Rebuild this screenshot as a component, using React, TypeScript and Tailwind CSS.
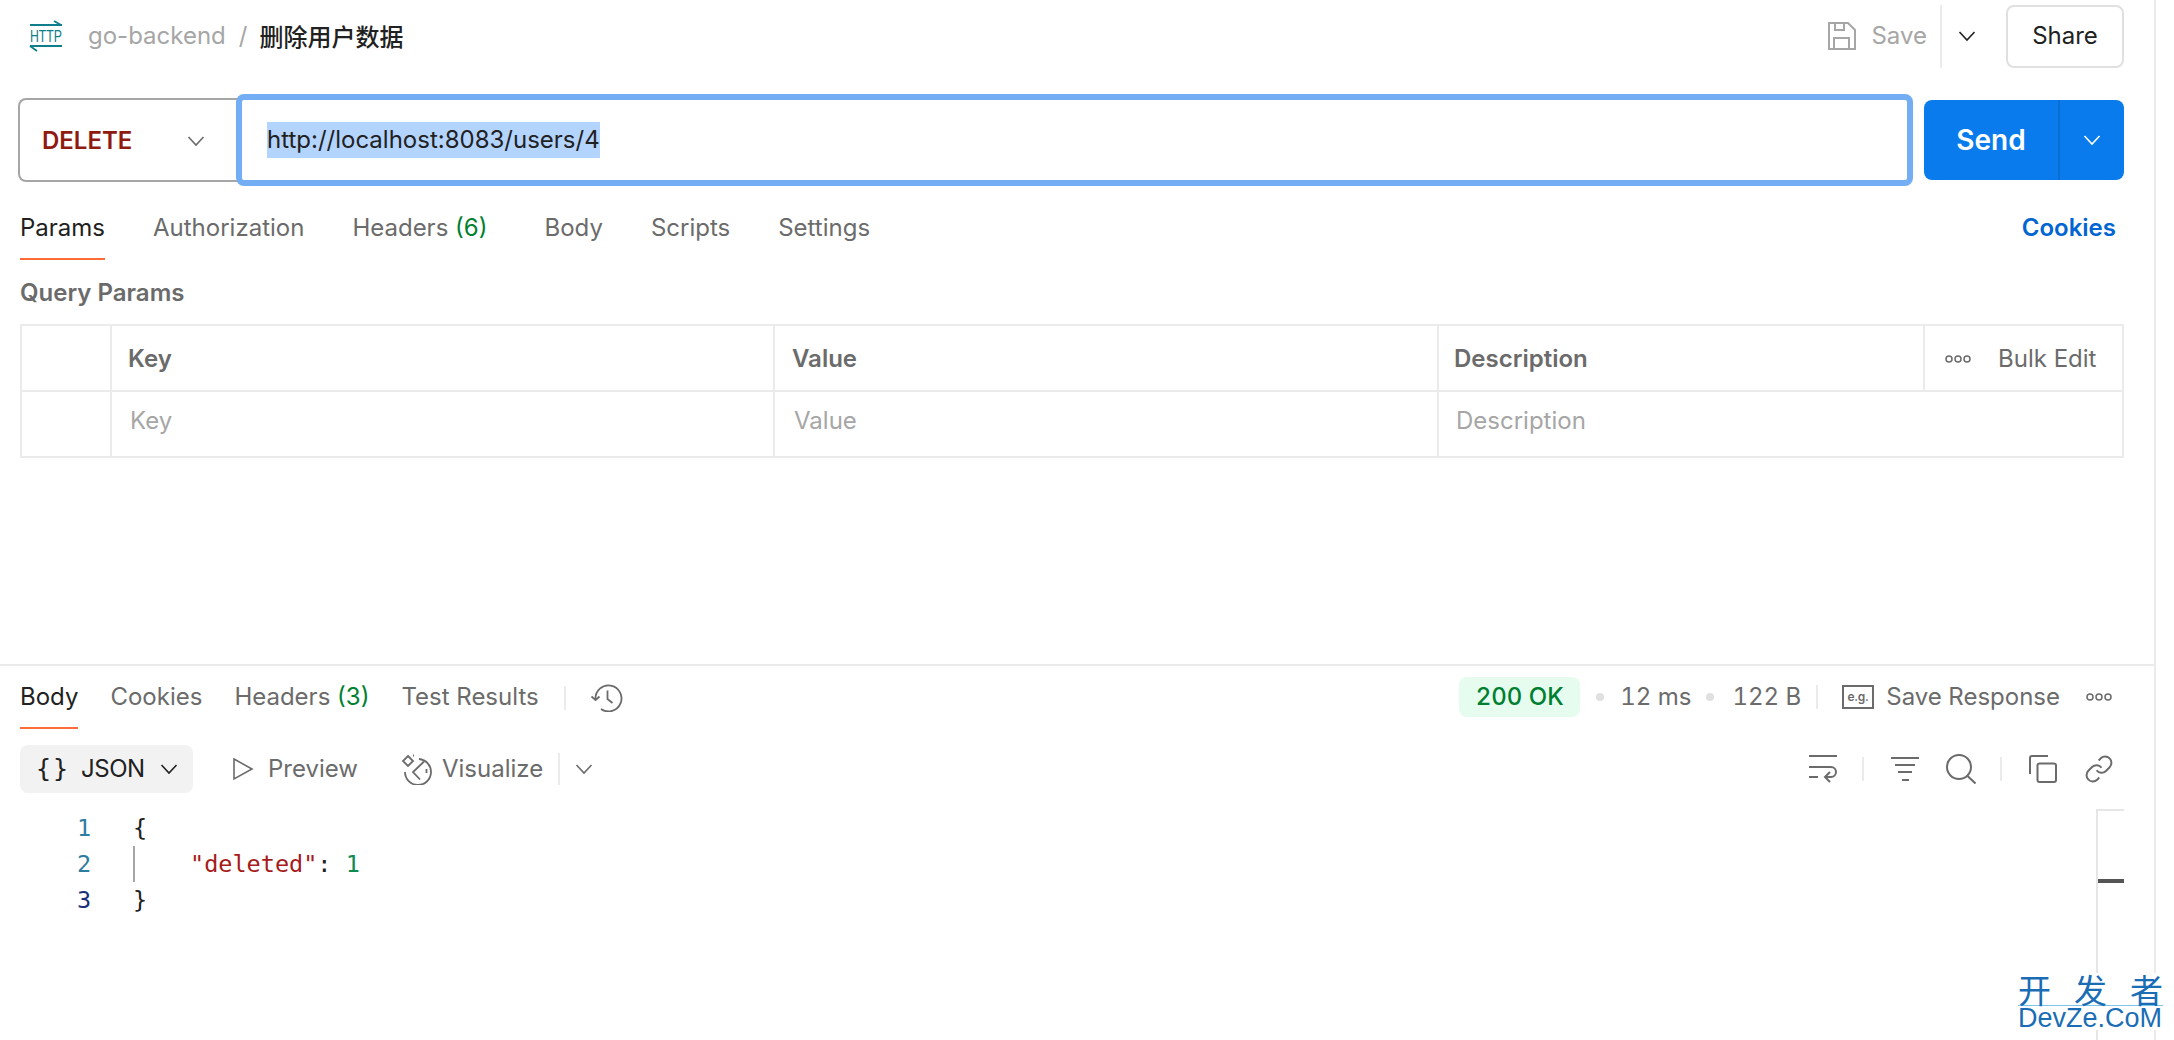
import { ReactNode } from 'react';

const Chevron = ({ className = '', size = 18 }: { className?: string; size?: number }) => (
  <svg width={size} height={size} viewBox="0 0 18 18" fill="none" stroke="currentColor" strokeWidth="1.6" className={className}>
    <path d="M1.5 5 L9 13 L16.5 5" />
  </svg>
);

const HttpLogo = () => (
  <svg width="34" height="32" viewBox="0 0 34 32" fill="none" stroke="#0e7d8c" strokeWidth="1.8" className="overflow-visible">
    <path d="M1 5h32M25 1l7 4" />
    <text x="1" y="22" fontFamily="Liberation Sans, sans-serif" fontSize="16.5" fill="#0e7d8c" stroke="none" textLength="32" lengthAdjust="spacingAndGlyphs">HTTP</text>
    <path d="M1 26h32M1 26l7 5" />
  </svg>
);

const SaveIcon = () => (
  <svg width="30" height="30" viewBox="0 0 30 30" fill="none" stroke="#a6a6a6" strokeWidth="2">
    <path d="M2 2h19l7 7v19H2z" />
    <path d="M8 2v7h9V2M7 28V17h15v11" />
  </svg>
);

const Dots = () => (
  <svg width="28" height="10" viewBox="0 0 28 10" fill="none" stroke="#6b6b6b" strokeWidth="1.5">
    <circle cx="5" cy="5" r="3" />
    <circle cx="14" cy="5" r="3" />
    <circle cx="23" cy="5" r="3" />
  </svg>
);

const HistoryIcon = () => (
  <svg width="32" height="28" viewBox="0 0 32 28" fill="none" stroke="#6b6b6b" strokeWidth="1.8">
    <path d="M4.500 15A13 13 0 1 1 10 25" />
    <path d="M0.500 12.500l4 3.500 4-3.500" />
    <path d="M16.500 6.500v8.500l5 4" />
  </svg>
);

const ExampleIcon = () => (
  <svg width="32" height="24" viewBox="0 0 32 24" fill="none">
    <rect x="1" y="1" width="30" height="22" stroke="#6b6b6b" strokeWidth="2" />
    <text x="16" y="16" textAnchor="middle" fontFamily="Inter, sans-serif" fontSize="12" fontWeight="600" fill="#6b6b6b">e.g.</text>
  </svg>
);

const WrapIcon = () => (
  <svg width="28" height="28" viewBox="0 0 28 28" fill="none" stroke="#6b6b6b" strokeWidth="2">
    <path d="M0 1h28M0 12h22a5 5 0 0 1 0 10H16" />
    <path d="M0 22h9M21 17l-5 5 5 5" />
  </svg>
);

const FilterIcon = () => (
  <svg width="28" height="26" viewBox="0 0 28 26" fill="none" stroke="#6b6b6b" strokeWidth="2">
    <path d="M0 2h28M4 9h20M7 16h14M11 24h7" />
  </svg>
);

const SearchIcon = () => (
  <svg width="30" height="30" viewBox="0 0 30 30" fill="none" stroke="#6b6b6b" strokeWidth="2">
    <circle cx="13" cy="13" r="12" />
    <path d="M21.500 22l8 7.500" />
  </svg>
);

const CopyIcon = () => (
  <svg width="28" height="28" viewBox="0 0 28 28" fill="none" stroke="#6b6b6b" strokeWidth="2">
    <path d="M1 19V3a2 2 0 0 1 2-2h16" />
    <rect x="8.500" y="8.500" width="18.500" height="18.500" rx="2" />
  </svg>
);

const LinkIcon = () => (
  <svg width="30" height="30" viewBox="0 0 24 24" fill="none" stroke="#6b6b6b" strokeWidth="1.600">
    <path d="M10 13a5 5 0 0 0 7.540.540l3-3a5 5 0 0 0-7.070-7.070l-1.720 1.710" />
    <path d="M14 11a5 5 0 0 0-7.540-.540l-3 3a5 5 0 0 0 7.070 7.070l1.710-1.710" />
  </svg>
);

const PlayIcon = () => (
  <svg width="22" height="24" viewBox="0 0 22 24" fill="none" stroke="#6b6b6b" strokeWidth="1.600">
    <path d="M2 2l18 10-18 10z" />
  </svg>
);

const VisualizeIcon = () => (
  <svg width="32" height="32" viewBox="0 0 32 32" fill="none" stroke="#6b6b6b" strokeWidth="1.800">
    <path d="M18 6a13 13 0 1 1-14 13" />
    <path d="M23 8.500l-11 10.500 7 7.500" />
    <path d="M25.500 16v4" />
    <path d="M7 3l5 5-5 5-5-5z" />
    <path d="M12 2.500h1" />
  </svg>
);

const Tab = ({ children, active, tall, className = '' }: { children: ReactNode; active?: boolean; tall?: boolean; className?: string }) => (
  <div
    className={`border-b-2 ${tall ? 'pt-[13px]' : 'pt-[16px]'} leading-[30px] ${
      active ? 'border-[#ff6c37] text-[#212121]' : 'border-transparent text-[#6b6b6b]'
    } ${className}`}
  >
    {children}
  </div>
);

const Cell = ({ children, className = '' }: { children?: ReactNode; className?: string }) => (
  <div className={`flex items-center border-[#ebebeb] ${className}`}>{children}</div>
);

const VLine = ({ className = '' }: { className?: string }) => <div className={`w-[2px] bg-[#ebebeb] ${className}`} />;
const Dot = () => <div className="size-[8px] rounded-full bg-[#e0e0e0]" />;

export default function App() {
  return (
    <div className="relative h-[1040px] w-[2174px] overflow-hidden bg-white font-['Inter',sans-serif] text-[24px] text-[#212121]">
      <div className="flex h-full w-[2156px] flex-col border-r-2 border-[#ebebeb]">
        {/* Header */}
        <div className="flex h-[71px] items-center justify-between pl-[29px] pr-[30px] pt-[1px]">
          <div className="flex items-center">
            <HttpLogo />
            <span className="ml-[25px] text-[#a6a6a6]">go-backend</span>
            <span className="ml-[13px] text-[#a6a6a6]">/</span>
            <span className="ml-[12px] font-['Noto_Sans_CJK_SC',sans-serif] font-medium">删除用户数据</span>
          </div>
          <div className="flex h-[63px] items-center">
            <SaveIcon />
            <span className="ml-[14px] text-[#a6a6a6]">Save</span>
            <VLine className="ml-[13px] h-[63px]" />
            <Chevron className="ml-[16px] text-[#212121]" />
            <div className="ml-[30px] flex h-[63px] w-[118px] items-center justify-center rounded-[8px] border-2 border-[#e0e0e0]">Share</div>
          </div>
        </div>

        {/* URL bar */}
        <div className="mt-[23px] flex h-[92px] items-center pl-[18px] pr-[30px]">
          <div className="flex h-[84px] w-[224px] items-center rounded-l-[8px] border-2 border-r-0 border-[#a6a6a6] pl-[22px] pt-[1px] font-semibold text-[#8e1a10]">
            DELETE
            <Chevron className="ml-[55px] text-[#6b6b6b]" />
          </div>
          <div className="-ml-[6px] flex h-[92px] flex-1 items-center rounded-[8px] border-[6px] border-[#73aef5] pl-[25px]">
            <span className="bg-[#b3d4ff] leading-[36px]">http://localhost:8083/users/4</span>
          </div>
          <div className="ml-[11px] flex h-[80px] w-[200px] rounded-[8px] bg-[#097bed] text-white">
            <div className="flex w-[136px] items-center justify-center border-r-2 border-[#0a6fd4] text-[28px] font-semibold">Send</div>
            <div className="flex flex-1 items-center justify-center">
              <Chevron />
            </div>
          </div>
        </div>

        {/* Request tabs */}
        <div className="mt-[14px] flex h-[60px] items-stretch justify-between pl-[20px] pr-[38px]">
          <div className="flex gap-[48px]">
            <Tab tall active>Params</Tab>
            <Tab tall>Authorization</Tab>
            <Tab tall className="mr-[9px]">Headers <span className="text-[#007f31]">(6)</span></Tab>
            <Tab tall>Body</Tab>
            <Tab tall>Scripts</Tab>
            <Tab tall>Settings</Tab>
          </div>
          <div className="pt-[13px] font-semibold leading-[30px] text-[#0265d2]">Cookies</div>
        </div>

        <div className="ml-[20px] mt-[18px] font-semibold leading-[30px] text-[#6b6b6b]">Query Params</div>

        {/* Params table */}
        <div className="ml-[20px] mt-[16px] grid w-[2104px] grid-cols-[90px_663px_664px_486px_1fr] grid-rows-[66px_64px] border-2 border-[#ebebeb]">
          <Cell className="border-b-2 border-r-2" />
          <Cell className="border-b-2 border-r-2 pl-[16px] pt-[2px] font-semibold text-[#6b6b6b]">Key</Cell>
          <Cell className="border-b-2 border-r-2 pl-[17px] pt-[2px] font-semibold text-[#6b6b6b]">Value</Cell>
          <Cell className="border-b-2 border-r-2 pl-[15px] pt-[2px] font-semibold text-[#6b6b6b]">Description</Cell>
          <Cell className="border-b-2 pl-[19px] pt-[2px] text-[#6b6b6b]">
            <Dots />
            <span className="ml-[26px]">Bulk Edit</span>
          </Cell>
          <Cell className="border-r-2" />
          <Cell className="border-r-2 pb-[6px] pl-[18px] text-[#a6a6a6]">Key</Cell>
          <Cell className="border-r-2 pb-[6px] pl-[19px] text-[#a6a6a6]">Value</Cell>
          <Cell className="col-span-2 pb-[6px] pl-[17px] text-[#a6a6a6]">Description</Cell>
        </div>

        {/* Response */}
        <div className="mt-[206px] flex min-h-0 flex-1 flex-col border-t-2 border-[#ebebeb]">
          <div className="flex h-[63px] items-stretch justify-between pl-[20px] pr-[41px]">
            <div className="flex gap-[32px]">
              <Tab active>Body</Tab>
              <Tab>Cookies</Tab>
              <Tab>Headers <span className="text-[#007f31]">(3)</span></Tab>
              <Tab>Test Results</Tab>
              <VLine className="-ml-[7px] h-[24px] self-center" />
              <div className="-ml-[7px] self-center"><HistoryIcon /></div>
            </div>
            <div className="mt-[11px] flex h-[40px] items-center text-[#6b6b6b] tabular-nums">
              <div className="flex h-[40px] w-[121px] items-center justify-center rounded-[8px] bg-[#e5fcef] font-medium text-[#007f31]">200 OK</div>
              <div className="ml-[16px]"><Dot /></div>
              <span className="ml-[16px]">12 ms</span>
              <div className="ml-[15px]"><Dot /></div>
              <span className="ml-[18px]">122 B</span>
              <VLine className="ml-[15px] h-[24px]" />
              <div className="ml-[24px]"><ExampleIcon /></div>
              <span className="ml-[12px]">Save Response</span>
              <div className="ml-[25px]"><Dots /></div>
            </div>
          </div>

          <div className="mt-[16px] flex h-[48px] items-center justify-between pl-[20px] pr-[40px]">
            <div className="flex items-center">
              <div className="flex h-[48px] w-[173px] items-center rounded-[8px] bg-[#f2f2f2] pl-[16px]">
                <span className="font-['DejaVu_Sans_Mono',monospace] text-[25px] tracking-[2px]">{'{}'}</span>
                <span className="ml-[11px] tracking-[-0.5px]">JSON</span>
                <Chevron className="ml-[15px]" />
              </div>
              <div className="ml-[39px]"><PlayIcon /></div>
              <span className="ml-[14px] text-[#6b6b6b]">Preview</span>
              <div className="ml-[43px]"><VisualizeIcon /></div>
              <span className="ml-[9px] text-[#6b6b6b]">Visualize</span>
              <VLine className="ml-[15px] h-[32px]" />
              <Chevron className="ml-[15px] text-[#6b6b6b]" />
            </div>
            <div className="flex items-center">
              <WrapIcon />
              <VLine className="ml-[25px] h-[24px]" />
              <div className="ml-[27px]"><FilterIcon /></div>
              <div className="ml-[27px]"><SearchIcon /></div>
              <VLine className="ml-[24px] h-[24px]" />
              <div className="ml-[27px]"><CopyIcon /></div>
              <div className="ml-[27px]"><LinkIcon /></div>
            </div>
          </div>

          <div className="mt-[16px] flex min-h-0 flex-1 justify-between pr-[30px]">
            <div className="pt-[1px] font-['DejaVu_Sans_Mono',monospace] text-[23.5px] leading-[36px]">
              <div className="flex">
                <span className="ml-[77px] w-[56px] text-[#2e7d9e]">1</span>
                <span>{'{'}</span>
              </div>
              <div className="flex">
                <span className="ml-[77px] w-[56px] text-[#2e7d9e]">2</span>
                <span className="w-[2px] bg-[#a6a6a6]" />
                <span className="ml-[55px] whitespace-pre">
                  <span className="text-[#a61b1b]">"deleted"</span>
                  {': '}
                  <span className="text-[#0f8a52]">1</span>
                </span>
              </div>
              <div className="flex">
                <span className="ml-[77px] w-[56px] text-[#1a2f78]">3</span>
                <span>{'}'}</span>
              </div>
            </div>
            <div className="w-[28px] border-l-2 border-t-2 border-[#e6e6e6] pt-[68px]">
              <div className="h-[4px] bg-[#555555]" />
            </div>
          </div>
        </div>
      </div>

      {/* Watermark */}
      <div className="absolute left-[2018px] top-[973px] h-[57px] w-[145px] bg-white text-[#1a6db5]">
        <div className="mt-[1px] flex justify-between border-b border-[#7cc4e8] font-['Noto_Sans_CJK_SC',sans-serif] text-[33px] leading-[31px]">
          <span>开</span>
          <span>发</span>
          <span>者</span>
        </div>
        <div className="font-['Liberation_Sans',sans-serif] text-[27px] leading-[24px]">DevZe.CoM</div>
      </div>
    </div>
  );
}
